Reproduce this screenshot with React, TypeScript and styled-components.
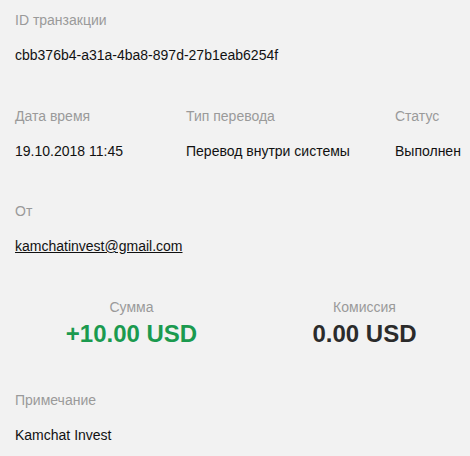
import React from "react";
import styled, { createGlobalStyle } from "styled-components";

const GlobalStyle = createGlobalStyle`
  html, body {
    margin: 0;
    padding: 0;
    background: #f2f2f2;
  }
  body {
    font-family: "Liberation Sans", Arial, sans-serif;
    font-size: 14px;
    color: #111;
  }
`;

const Page = styled.div`
  padding: 10px 15px 12px;
  width: 470px;
  box-sizing: border-box;
`;

const Section = styled.div<{ $gap?: number }>`
  margin-bottom: ${(p) => p.$gap ?? 41}px;
`;

const Row = styled.div`
  display: grid;
  grid-template-columns: 171px 209px max-content;
`;

const Field = styled.div`
  display: flex;
  flex-direction: column;
  gap: 15px;
  white-space: nowrap;
`;

const Label = styled.div`
  color: #9a9a9a;
  line-height: 20px;
`;

const Value = styled.div`
  color: #111;
  line-height: 20px;
`;

const Email = styled.a`
  color: #111;
  text-decoration: underline;
  line-height: 20px;
`;

const Amounts = styled.div`
  display: grid;
  grid-template-columns: 233px 233px;
  margin-bottom: 42px;
`;

const AmountCol = styled.div`
  display: flex;
  flex-direction: column;
  align-items: center;
  gap: 3px;
`;

const Amount = styled.div<{ $positive?: boolean }>`
  font-size: 24px;
  font-weight: bold;
  line-height: 28px;
  color: ${(p) => (p.$positive ? "#1b9a4f" : "#2b2b2b")};
`;

export default function App() {
  return (
    <Page>
      <GlobalStyle />
      <Section>
        <Field>
          <Label>ID транзакции</Label>
          <Value>cbb376b4-a31a-4ba8-897d-27b1eab6254f</Value>
        </Field>
      </Section>
      <Section $gap={40}>
        <Row>
          <Field>
            <Label>Дата время</Label>
            <Value>19.10.2018 11:45</Value>
          </Field>
          <Field>
            <Label>Тип перевода</Label>
            <Value>Перевод внутри системы</Value>
          </Field>
          <Field>
            <Label>Статус</Label>
            <Value>Выполнен</Value>
          </Field>
        </Row>
      </Section>
      <Section $gap={41}>
        <Field>
          <Label>От</Label>
          <div>
            <Email href="#">kamchatinvest@gmail.com</Email>
          </div>
        </Field>
      </Section>
      <Amounts>
        <AmountCol>
          <Label>Сумма</Label>
          <Amount $positive>+10.00 USD</Amount>
        </AmountCol>
        <AmountCol>
          <Label>Комиссия</Label>
          <Amount>0.00 USD</Amount>
        </AmountCol>
      </Amounts>
      <Section $gap={0}>
        <Field>
          <Label>Примечание</Label>
          <Value>Kamchat Invest</Value>
        </Field>
      </Section>
    </Page>
  );
}
